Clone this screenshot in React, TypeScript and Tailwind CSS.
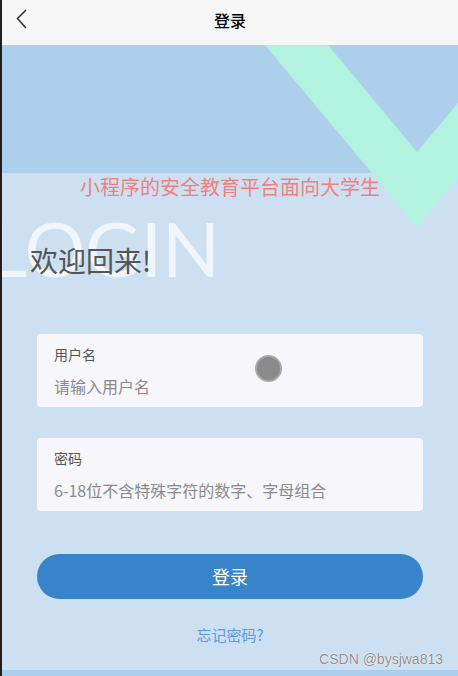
import React from "react";

const cjk = { fontFamily: '"Noto Sans CJK SC", "Noto Sans", sans-serif' };

function BackIcon() {
  return (
    <svg width="14" height="22" viewBox="0 0 14 22" fill="none">
      <path d="M10.5 2.5 L2.5 10.5 L10.5 19.5" stroke="#333" strokeWidth="1.6" strokeLinecap="round" strokeLinejoin="round" />
    </svg>
  );
}

function Field({ label, placeholder }: { label: string; placeholder: string }) {
  return (
    <div className="h-[73px] rounded-[4px] bg-[#f7f6fa] pl-[17px] pt-[10px]">
      <div className="text-[14px] leading-[20px] text-[#555]">{label}</div>
      <div className="mt-[10px] text-[16px] leading-[24px] text-[#8a8a8a]">{placeholder}</div>
    </div>
  );
}

export default function App() {
  return (
    <div className="relative flex h-[676px] w-full flex-col overflow-hidden border-l-2 border-[#1e1e1e] bg-[#cce0f2]" style={cjk}>
      {/* nav bar */}
      <div className="relative flex h-[45px] shrink-0 items-center justify-center bg-[#f7f7f7] pb-[5px]">
        <div className="absolute left-[13px] top-[8px]">
          <BackIcon />
        </div>
        <span className="text-[16px] font-medium leading-[22px] text-black">登录</span>
      </div>

      {/* decoration */}
      <div className="h-[128px] shrink-0 bg-[#aecfec]" />
      <svg className="absolute right-0 top-[45px]" width="193" height="183" viewBox="0 0 193 183">
        <polygon points="0,0 63,0 152,107 193,58 193,133 152,182" fill="#b2f3df" />
      </svg>

      <p className="relative text-center text-[20px] leading-[28px] text-[#f08080]">小程序的安全教育平台面向大学生</p>

      <div className="relative mt-[5px] h-[80px]">
        <div
          className="ml-[-14px] pt-[4px] text-[76px] font-normal leading-[76px] text-[#f5f8fb]/90"
          style={{ fontFamily: 'Lato, "Liberation Sans", sans-serif' }}
        >
          LOGIN
        </div>
        <div className="absolute left-[28px] top-[36px] text-[28px] leading-[36px] text-[#555]">欢迎回来!</div>
      </div>

      {/* form */}
      <div className="relative mt-[48px] flex flex-col px-[35px]">
        <Field label="用户名" placeholder="请输入用户名" />
        <div className="mt-[31px]">
          <Field label="密码" placeholder="6-18位不含特殊字符的数字、字母组合" />
        </div>
        <button className="mt-[43px] h-[45px] rounded-full bg-[#3784cb] text-[18px] text-white">登录</button>
        <div className="mt-[24px] text-center text-[15px] leading-[24px] text-[#5a98e0]">忘记密码?</div>
      </div>

      <div className="mt-auto h-[6px] shrink-0 bg-[#aecfec]" />

      {/* touch indicator */}
      <div className="absolute left-[253px] top-[355px] h-[27px] w-[27px] rounded-full border-2 border-[#a9a9a9] bg-[#8a8a8a]" />

      {/* watermark */}
      <div
        className="absolute right-[15px] top-[650px] text-[14px] leading-[18px] text-[#8d8d8d] [text-shadow:0_0_1px_#fff,0_0_1px_#fff]"
        style={{ fontFamily: '"Liberation Sans", Arial, sans-serif' }}
      >
        CSDN @bysjwa813
      </div>
    </div>
  );
}
